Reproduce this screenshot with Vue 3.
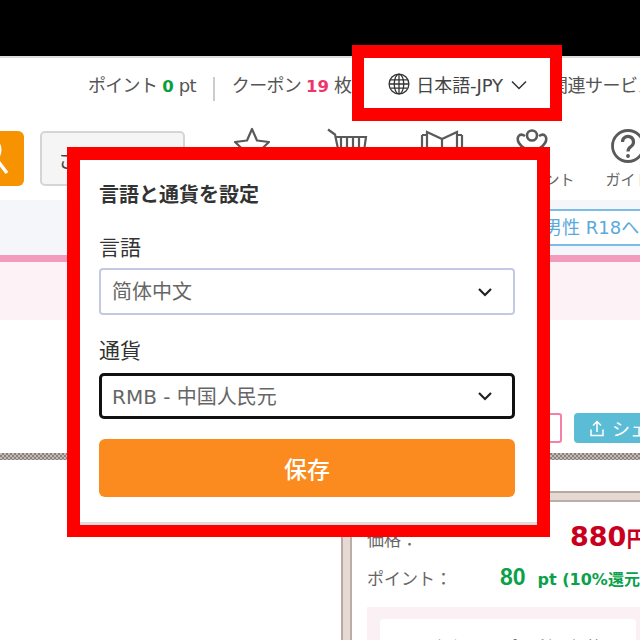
<template>
  <div class="page">
    <div class="blackbar"></div>

    <div class="topnav">
      <span class="tn">ポイント <b class="num green">0</b> pt</span>
      <i class="sep"></i>
      <span class="tn">クーポン <b class="num pink">19</b> 枚</span>
      <span class="lang">
        <svg class="globe" width="22" height="22" viewBox="0 0 24 24" fill="none" stroke="#333" stroke-width="1.4">
          <circle cx="12" cy="12" r="10.800" />
          <ellipse cx="12" cy="12" rx="5.200" ry="10.800" />
          <path d="M12 1.200V22.800M2.400 7.500H21.600M2.400 16.500H21.600M1.200 12H22.800" />
        </svg>
        日本語-JPY
        <svg class="chev" width="16" height="10" viewBox="0 0 16 10" fill="none" stroke="#333" stroke-width="1.500">
          <path d="M1 1.500l7 7 7-7" />
        </svg>
      </span>
      <span class="tn rel">関連サービス</span>
    </div>

    <div class="toolrow">
      <div class="searchbtn">
        <svg width="24" height="55" viewBox="0 0 24 55" fill="none" stroke="#fff" stroke-width="3">
          <circle cx="-13" cy="19" r="13" />
          <path d="M-3 29l10 13" stroke-width="3.500" />
        </svg>
      </div>
      <div class="sbox">さ</div>
      <div class="tools">
        <div class="tool">
          <svg width="60" height="40" viewBox="0 0 60 40" fill="none" stroke="#5a5a5a" stroke-width="2.200" stroke-linejoin="round">
            <path d="M30 3l5 11.500 12 1.500-9 8.500 2.500 12L30 30.500 19.500 36.500l2.500-12-9-8.500 12-1.500z" />
          </svg>
        </div>
        <div class="tool">
          <svg width="60" height="40" viewBox="0 0 60 40" fill="none" stroke="#5a5a5a" stroke-width="2.200">
            <path d="M12 3.500l7 5 5 24h22M19 11h31l-3 21M25 11v21M31 11v21M37 11v21M43 11v21" />
          </svg>
        </div>
        <div class="tool">
          <svg width="60" height="40" viewBox="0 0 60 40" fill="none" stroke="#5a5a5a" stroke-width="2.200">
            <path d="M17 6l15 7 15-7v28l-15 5-15-5zM32 13v26M12 9v28M52 9v28M12 9h5M47 9h5" />
          </svg>
        </div>
        <div class="tool">
          <svg width="60" height="40" viewBox="0 0 60 40" fill="none" stroke="#5a5a5a" stroke-width="2.600">
            <circle cx="28" cy="9.500" r="5" />
            <path d="M21 10c-6-4-9 2-6 7 3 5 8 7 13 7s10-2 13-7c3-5 0-11-6-7M16 26v12h24V26" />
          </svg>
          <span class="tl gift">プレゼント</span>
        </div>
        <div class="tool">
          <svg width="60" height="40" viewBox="0 0 60 40" fill="none" stroke="#5a5a5a" stroke-width="2.800">
            <circle cx="30" cy="20" r="15.500" />
            <path d="M24.500 16a5.500 5.500 0 1 1 8.500 4.500c-2 1.400-3 2.500-3 5" stroke-width="3.200" />
            <circle cx="30" cy="30" r="1.300" fill="#5a5a5a" stroke-width="1.200" />
          </svg>
          <span class="tl">ガイド</span>
        </div>
      </div>
    </div>

    <div class="band">
      <div class="r18">男性 R18へ</div>
    </div>
    <div class="pinkline"></div>
    <div class="pinkband"></div>

    <div class="actions">
      <div class="fav"></div>
      <div class="share">
        <svg width="16" height="17" viewBox="0 0 16 17" fill="none" stroke="#fff" stroke-width="1.500">
          <path d="M8 12V2M4 5.500L8 1.500l4 4M2 9.500v6h12v-6" />
        </svg>
        シェ
      </div>
    </div>
    <div class="dots"></div>

    <div class="panel">
      <div class="row price"><span class="lbl">価格：</span><b class="amt">880<small>円</small></b></div>
      <div class="row pts"><span class="lbl">ポイント：</span><b class="gr">80</b><b class="gr2">pt (10%還元</b></div>
      <div class="coupon"><div class="cin">≪ 必須クーポン利用価格</div></div>
    </div>

    <div class="top-frame"></div>

    <div class="modal">
      <h2>言語と通貨を設定</h2>
      <label>言語</label>
      <div class="select">
        <span class="val">简体中文</span>
        <svg width="16" height="10" viewBox="0 0 16 10" fill="none" stroke="#222" stroke-width="2.200"><path d="M2 2l6 6 6-6" /></svg>
      </div>
      <label class="second">通貨</label>
      <div class="select focus">
        <span class="val">RMB - 中国人民元</span>
        <svg width="16" height="10" viewBox="0 0 16 10" fill="none" stroke="#222" stroke-width="2.200"><path d="M2 2l6 6 6-6" /></svg>
      </div>
      <div class="save">保存</div>
    </div>
  </div>
</template>

<script setup>
</script>

<style>
html, body { margin: 0; background: #fff; }
</style>

<style scoped>
.page {
  position: relative;
  width: 640px;
  height: 640px;
  overflow: hidden;
  background: #fff;
  font-family: "DejaVu Sans", "Noto Sans CJK JP", sans-serif;
  color: #444;
}
.blackbar { height: 56px; background: #000; border-bottom: 2px solid #ddd; }
.topnav {
  height: 52px;
  display: flex;
  align-items: center;
  padding-left: 88px;
  white-space: nowrap;
  font-size: 18px;
  color: #555;
}
.tn { flex: none; letter-spacing: -0.7px; }
.num { font-size: 16.500px; letter-spacing: 0; }
.green { color: #0a9e3c; }
.pink { color: #f0336b; }
.sep { width: 2px; height: 24px; background: #ccc; margin: 9px 17px 0 17px; flex: none; }
.lang {
  display: flex;
  align-items: center;
  margin-left: 37px;
  flex: none;
  color: #444;
  letter-spacing: -0.1px;
}
.globe { margin-right: 6px; }
.chev { margin-left: 8px; margin-top: 2px; }
.rel { margin-left: 23px; letter-spacing: -0.5px; }

.toolrow { height: 90px; display: flex; align-items: flex-start; padding-top: 21px; box-sizing: border-box; }
.searchbtn { width: 24px; height: 55px; background: #f79200; border-radius: 0 6px 6px 0; flex: none; overflow: hidden; }
.searchbtn svg { display: block; overflow: visible; }
.sbox {
  width: 145px;
  height: 55px;
  margin-left: 16px;
  box-sizing: border-box;
  background: #f5f5f5;
  border: 2px solid #d5d5d5;
  border-radius: 5px;
  padding: 12px 16px;
  font-size: 20px;
  flex: none;
}
.tools { display: flex; margin: -5px 0 0 20px; flex: none; }
.tool { width: 94px; flex: none; display: flex; flex-direction: column; align-items: center; }
.tool svg { display: block; }
.tl { font-size: 15px; line-height: 20px; color: #666; margin-top: 4px; white-space: nowrap; }
.tl.gift { margin-left: 6px; }

.band { height: 55px; background: #f5f6fa; display: flex; justify-content: flex-end; align-items: center; }
.r18 {
  width: 120px;
  height: 37px;
  box-sizing: border-box;
  border: 2px solid #7bbde8;
  border-right: 0;
  background: #fff;
  color: #5aa9dd;
  font-size: 18px;
  line-height: 33px;
  padding-left: 22px;
  white-space: nowrap;
  overflow: hidden;
}
.pinkline { height: 7px; background: #f39bbd; }
.pinkband { height: 58px; background: #fdf3f6; }

.actions { height: 133px; display: flex; align-items: flex-end; justify-content: flex-end; gap: 12px; }
.fav { width: 42px; height: 30px; border: 2px solid #f77fa3; border-radius: 3px; box-sizing: border-box; margin-bottom: 10px; background: #fff; }
.share {
  width: 66px;
  height: 30px;
  background: #5bbcd6;
  border-radius: 4px 0 0 4px;
  color: #fff;
  font-size: 18px;
  display: flex;
  align-items: center;
  gap: 7px;
  padding-left: 15px;
  box-sizing: border-box;
  white-space: nowrap;
  overflow: hidden;
  margin-bottom: 10px;
}
.share svg { flex: none; }
.dots {
  height: 7px;
  background-image: conic-gradient(#8a817d 25%, #c2bbb7 0 50%, #8a817d 0 75%, #c2bbb7 0);
  background-size: 4px 4px;
}

.panel {
  margin: 31px 0 0 341px;
  width: 299px;
  height: 149px;
  box-sizing: border-box;
  border: 2px solid #b9a9a1;
  border-right: 0;
  border-bottom: 0;
  box-shadow: inset 7px 7px 0 #e4d9d3, inset 9px 9px 0 #bcaea6;
  padding: 28px 0 0 24px;
  white-space: nowrap;
  overflow: hidden;
}
.row { display: flex; align-items: baseline; }
.lbl { width: 114px; font-size: 17px; color: #666; flex: none; }
.amt { font-size: 27px; color: #c8001e; margin-left: 89px; }
.amt small { font-size: 21px; }
.pts { margin-top: 12px; }
.gr { color: #0aa14a; font-size: 23px; margin-left: 19px; font-family: "Liberation Sans", sans-serif; }
.gr2 { color: #0aa14a; font-size: 16px; margin-left: 12px; }
.coupon { margin: 16px 0 0 0; width: 273px; height: 80px; background: #fbf0f3; padding: 12px 4px 0 13px; box-sizing: border-box; }
.cin { background: #fff; height: 60px; border-radius: 4px; padding: 15px 30px; font-size: 17px; color: #555; }

.top-frame { position: absolute; left: 352px; top: 45px; width: 210px; height: 76px; box-sizing: border-box; border: solid #f00; border-width: 13px 12px; }

.modal {
  position: absolute;
  left: 67px;
  top: 147px;
  width: 483px;
  height: 390px;
  box-sizing: border-box;
  border: 13px solid #f00;
  border-bottom-width: 12px;
  background: #fff;
  padding: 21px 22px 0 19px;
  box-shadow: inset 0 -3px 0 #ddd;
}
h2 { margin: 0; font-size: 20px; line-height: 28px; font-weight: 700; color: #333; }
label { display: block; margin-top: 25px; font-size: 21px; line-height: 28px; color: #333; }
label.second { margin-top: 22px; }
.select {
  margin-top: 6px;
  height: 47px;
  box-sizing: border-box;
  border: 2px solid #c3c9e0;
  border-radius: 4px;
  display: flex;
  align-items: center;
  justify-content: space-between;
  padding: 0 20px 0 11px;
  font-size: 20px;
  color: #666;
  font-family: "DejaVu Sans", "Noto Sans CJK SC", sans-serif;
}
.val { margin-bottom: 2px; }
.select.focus { margin-top: 8px; border: 3px solid #111; border-radius: 5px; padding-left: 10px; padding-right: 19px; height: 46px; }
.save {
  margin-top: 20px;
  height: 58px;
  background: #fb8b1e;
  border-radius: 6px;
  color: #fff;
  font-size: 23px;
  font-weight: 500;
  display: flex;
  align-items: center;
  justify-content: center;
}
</style>
